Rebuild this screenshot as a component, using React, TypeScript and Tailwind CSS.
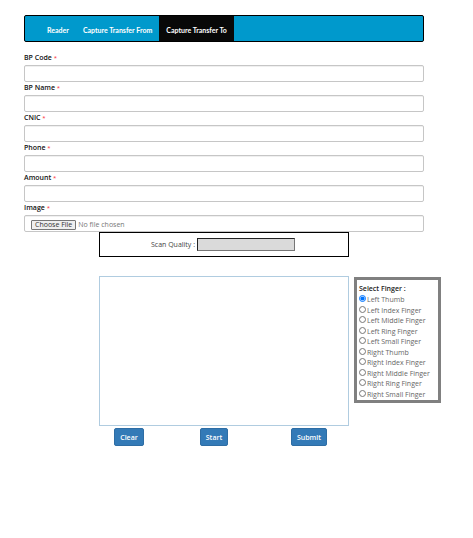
import { useState } from "react";

const tabs = ["Reader", "Capture Transfer From", "Capture Transfer To"];

const fields = [
  { id: "bp-code", label: "BP Code" },
  { id: "bp-name", label: "BP Name" },
  { id: "cnic", label: "CNIC" },
  { id: "phone", label: "Phone" },
  { id: "amount", label: "Amount" },
];

const fingers = [
  "Left Thumb",
  "Left Index Finger",
  "Left Middle Finger",
  "Left Ring Finger",
  "Left Small Finger",
  "Right Thumb",
  "Right Index Finger",
  "Right Middle Finger",
  "Right Ring Finger",
  "Right Small Finger",
];

const inputBox =
  "block h-[17px] w-full rounded-[2px] border border-[#c6c6c6] bg-white shadow-[inset_0_1px_0_#f0f0f0]";
const button =
  "h-[18px] rounded-[2px] border border-[#2e6da4] bg-[#337ab7] font-semibold leading-none text-white";

function FieldLabel({ id, text }: { id: string; text: string }) {
  return (
    <label htmlFor={id} className="block h-[13px] font-semibold leading-[12px] text-[#111]">
      {text} <span className="text-[6px] font-normal text-red-500">*</span>
    </label>
  );
}

export default function App() {
  const [finger, setFinger] = useState("Left Thumb");

  return (
    <main className="bg-white pr-[49px] pl-6 pt-[15px] font-['Open_Sans','Noto_Sans',sans-serif] text-[7px] text-[#444]">
      <nav className="flex h-[27px] rounded-[2px] border border-black bg-[#0099cc] pl-[15px] font-[Lato,'Open_Sans',sans-serif]">
        {tabs.map((tab) => (
          <a
            key={tab}
            href="#"
            className={`flex items-center px-[7px] pt-[3px] font-bold text-white ${
              tab === "Capture Transfer To" ? "bg-[#080808]" : ""
            }`}
          >
            {tab}
          </a>
        ))}
      </nav>

      <form className="mt-[10px]" onSubmit={(e) => e.preventDefault()}>
        {fields.map((f) => (
          <div key={f.id}>
            <FieldLabel id={f.id} text={f.label} />
            <input id={f.id} type="text" className={`${inputBox} px-[6px]`} />
          </div>
        ))}
        <FieldLabel id="image" text="Image" />
        <input
          id="image"
          type="file"
          className={`${inputBox} px-[6px] pt-[4px] leading-[10px] text-[#777] file:mr-[2px] file:h-[10px] file:rounded-[1px] file:border file:border-solid file:border-[#767676] file:bg-[#efefef] file:px-[3px] file:leading-[8px] file:text-[#333]`}
        />

        <div className="ml-[75px]">
          <div className="flex h-[25px] w-[250px] items-center justify-center gap-[2px] border border-black pr-[2px]">
            <label htmlFor="quality" className="pt-[2px]">Scan Quality :</label>
            <input
              id="quality"
              type="text"
              readOnly
              className="h-[13px] w-[98px] border border-t-[#222] border-r-[#767676] border-b-[#767676] border-l-[#222] bg-[#dadada]"
            />
          </div>

          <div className="mt-[19px] flex items-start gap-[5px]">
            <div className="shrink-0">
              <div className="h-[150px] w-[250px] border border-[#b0cce0]" />
              <div className="mt-[2px] flex pl-[15px]">
                <button type="button" className={`${button} mr-14 w-[30px]`}>
                  Clear
                </button>
                <button type="button" className={`${button} mr-[63px] w-7`}>
                  Start
                </button>
                <button type="submit" className={`${button} w-9`}>
                  Submit
                </button>
              </div>
            </div>

            <fieldset className="mt-px flex h-[126px] w-[87px] shrink-0 flex-col border-3 border-[#808080] px-[2px] pt-[4px]">
              <div className="h-[11px] font-semibold leading-[10px] text-[#222]">Select Finger :</div>
              <div className="grid flex-1 grid-rows-10">
                {fingers.map((name) => (
                  <label key={name} className="flex items-center gap-px whitespace-nowrap leading-[10px] text-[#666]">
                    <input
                      type="radio"
                      name="finger"
                      checked={finger === name}
                      onChange={() => setFinger(name)}
                      className="mb-[3px] size-[7px] shrink-0"
                    />
                    {name}
                  </label>
                ))}
              </div>
            </fieldset>
          </div>
        </div>
      </form>
    </main>
  );
}
